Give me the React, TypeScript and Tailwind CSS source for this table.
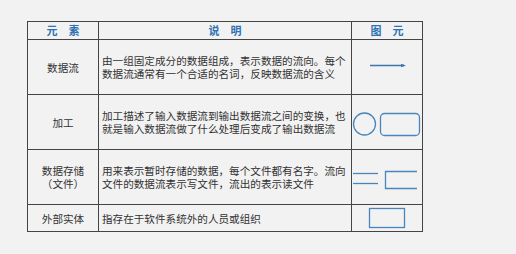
import type { ReactNode } from "react";

const font = { fontFamily: '"Noto Sans CJK SC", "Noto Sans", sans-serif' };

const rows: { name: ReactNode; desc: ReactNode; h: string; icon: ReactNode }[] = [
  {
    name: "数据流",
    desc: (
      <>
        由一组固定成分的数据组成，表示数据的流向。每个
        <br />
        数据流通常有一个合适的名词，反映数据流的含义
      </>
    ),
    h: "h-[55px]",
    icon: (
      <svg width="70" height="54" viewBox="0 0 70 54" className="block">
        <line x1="18" y1="25.5" x2="52" y2="25.5" stroke="#3b76b1" strokeWidth="1.4" />
        <polygon points="54,25.5 49,23.8 49,27.2" fill="#3b76b1" />
      </svg>
    ),
  },
  {
    name: "加工",
    desc: (
      <>
        加工描述了输入数据流到输出数据流之间的变换，也
        <br />
        就是输入数据流做了什么处理后变成了输出数据流
      </>
    ),
    h: "h-[55px]",
    icon: (
      <svg width="70" height="54" viewBox="0 0 70 54" className="block">
        <circle cx="12.5" cy="29" r="11" fill="none" stroke="#4a86bb" strokeWidth="1.3" />
        <rect x="28.5" y="18.5" width="39" height="22" rx="4" fill="none" stroke="#4a86bb" strokeWidth="1.3" />
      </svg>
    ),
  },
  {
    name: (
      <>
        数据存储
        <br />
        （文件）
      </>
    ),
    desc: (
      <>
        用来表示暂时存储的数据，每个文件都有名字。流向
        <br />
        文件的数据流表示写文件，流出的表示读文件
      </>
    ),
    h: "h-[55px]",
    icon: (
      <svg width="70" height="54" viewBox="0 0 70 54" className="block">
        <line x1="1" y1="23.5" x2="26" y2="23.5" stroke="#4a86bb" strokeWidth="1.3" />
        <line x1="1" y1="33.5" x2="26" y2="33.5" stroke="#4a86bb" strokeWidth="1.3" />
        <path d="M65 21.5 H33.5 V38.5 H65" fill="none" stroke="#4a86bb" strokeWidth="1.3" />
      </svg>
    ),
  },
  {
    name: "外部实体",
    desc: "指存在于软件系统外的人员或组织",
    h: "h-[27px]",
    icon: (
      <svg width="70" height="26" viewBox="0 0 70 26" className="block">
        <rect x="17.5" y="3.5" width="35" height="19" fill="none" stroke="#4a86bb" strokeWidth="1.3" />
      </svg>
    ),
  },
];

export default function App() {
  return (
    <div className="w-[516px] h-[254px] bg-[#f2f2f2] pt-[21px] pl-[27px] overflow-hidden" style={font}>
      <div className="grid grid-cols-[71px_253px_71px] w-[396px] border-l border-t border-[#444444] text-[#333333]">
        <div className="h-[18px] border-r border-b border-[#444444] flex items-center justify-center text-[11px] font-bold text-[#2f72b4]">
          元　素
        </div>
        <div className="h-[18px] border-r border-b border-[#444444] flex items-center justify-center text-[11px] font-bold text-[#2f72b4]">
          说　明
        </div>
        <div className="h-[18px] border-r border-b border-[#444444] flex items-center justify-center text-[11px] font-bold text-[#2f72b4]">
          图　元
        </div>
        {rows.map((r, i) => (
          <div key={i} className="contents">
            <div
              className={`${r.h} border-r border-b border-[#444444] flex items-center justify-center text-center text-[10.6px] leading-[13px]`}
            >
              <div>{r.name}</div>
            </div>
            <div
              className={`${r.h} border-r border-b border-[#444444] flex items-center pl-[3px] text-[10.6px] leading-[13px] whitespace-nowrap`}
            >
              <div>{r.desc}</div>
            </div>
            <div className={`${r.h} border-r border-b border-[#444444] overflow-hidden`}>{r.icon}</div>
          </div>
        ))}
      </div>
    </div>
  );
}
